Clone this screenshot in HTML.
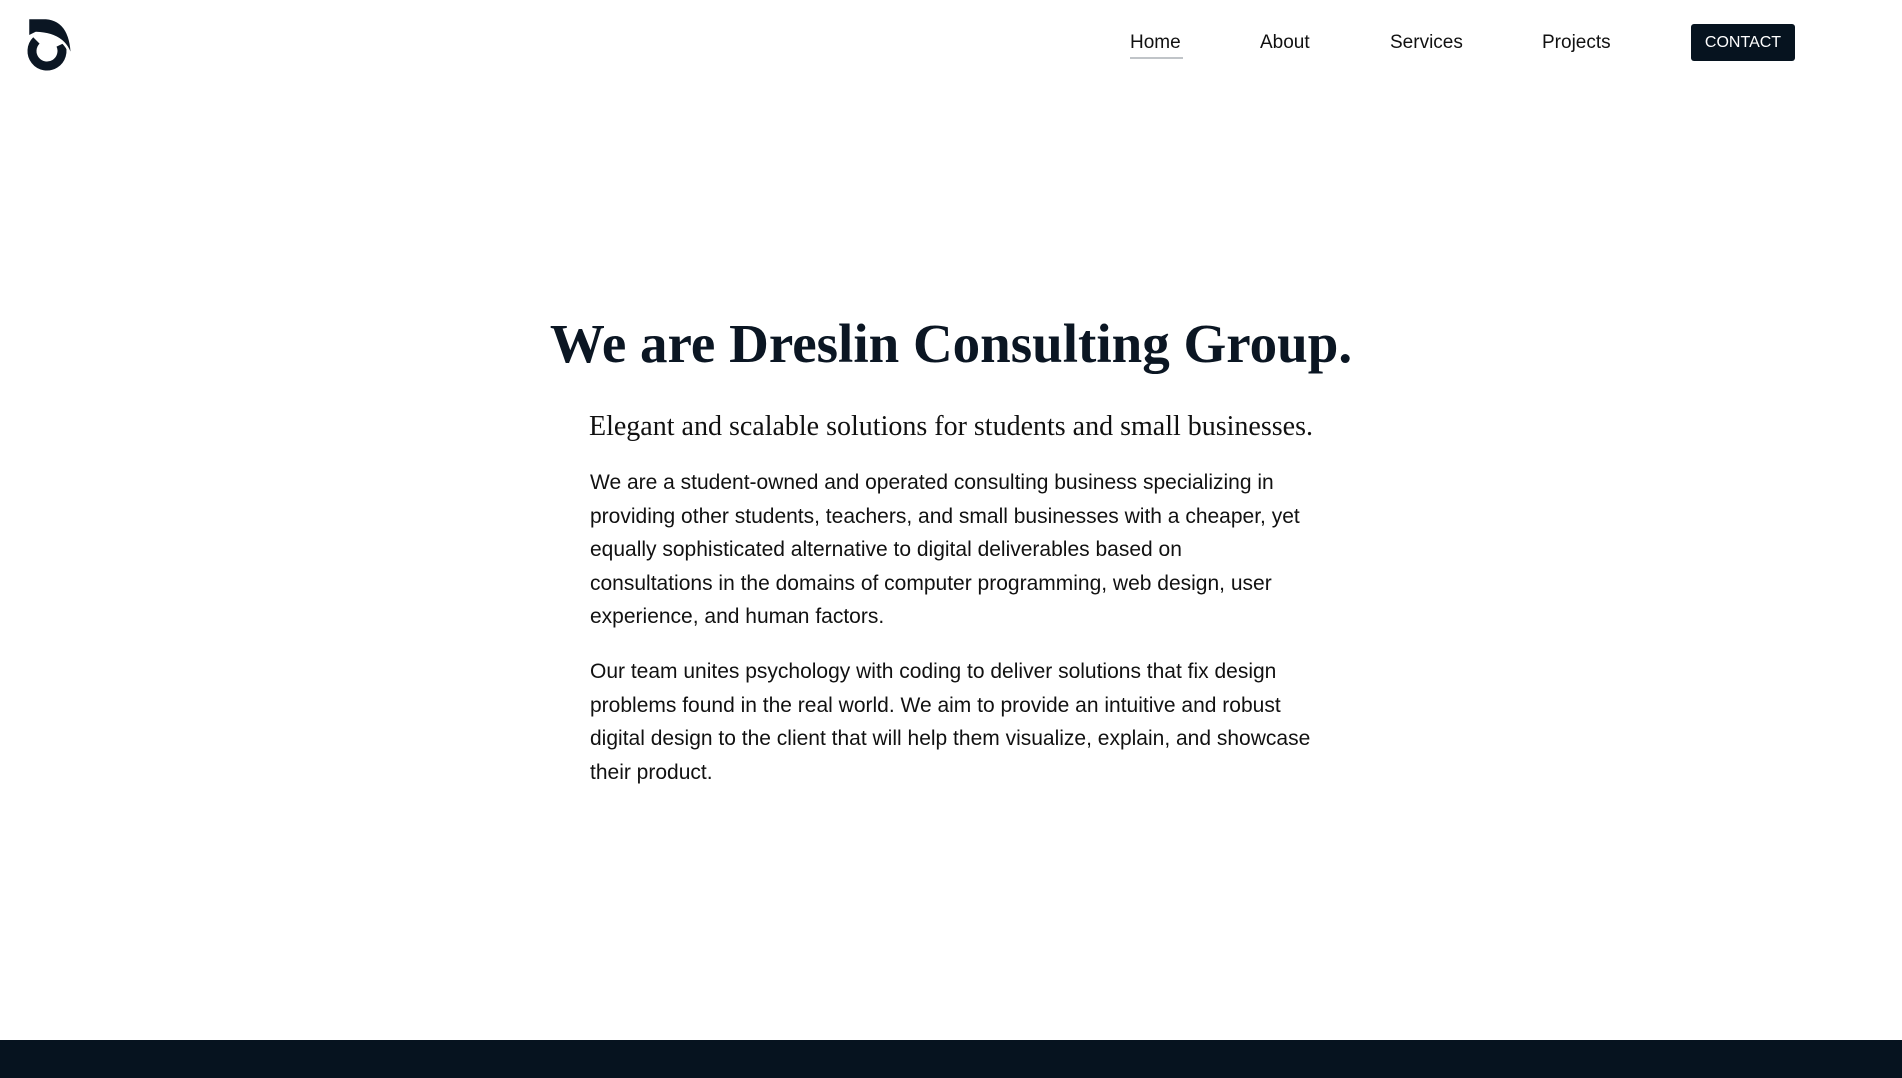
<!DOCTYPE html>
<html><head><style>
*{margin:0;padding:0;box-sizing:border-box}
body{width:1902px;height:1078px;background:#fff;position:relative;overflow:hidden;font-family:"Liberation Sans",sans-serif;color:#0b1623}
.nav a{position:absolute;top:31px;font-size:19px;color:#111;text-decoration:none;line-height:24px}
.btn{position:absolute;left:1691px;top:24px;width:104px;height:37px;background:#06131f;color:#fff;border-radius:3px;font-size:16px;text-align:center;line-height:37px}
h1{position:absolute;left:0;width:1902px;text-align:center;top:312px;font-family:"Liberation Serif",serif;font-weight:bold;font-size:55px;color:#0b1623}
.sub{position:absolute;left:0;width:1902px;text-align:center;top:411px;font-family:"Liberation Serif",serif;font-size:28px;color:#111}
.p{position:absolute;left:590px;white-space:nowrap;font-size:21px;line-height:33.5px;color:#111}
footer{position:absolute;left:0;top:1040px;width:1902px;height:38px;background:#06131f}
</style></head><body>
<svg style="position:absolute;left:0;top:0" width="90" height="80" viewBox="0 0 90 80">
<path d="M36.4 40.4 A15 15 0 1 0 60.6 44.7" fill="none" stroke="#0b1623" stroke-width="9"/>
<path d="M28 18 L46 18 Q73 20 72 62 Q68 34 36 33 L28 37 Z" fill="#0b1623" stroke="#fff" stroke-width="2.5" stroke-linejoin="round"/>
<rect x="26" y="14" width="20" height="3.2" fill="#fff"/>
</svg>
<div class="nav">
<a style="left:1130px">Home</a>
<a style="left:1260px">About</a>
<a style="left:1390px">Services</a>
<a style="left:1542px">Projects</a>
</div>
<div style="position:absolute;left:1130px;top:57px;width:53px;height:2px;background:#c0c4c8"></div>
<div class="btn">CONTACT</div>
<h1>We are Dreslin Consulting Group.</h1>
<div class="sub">Elegant and scalable solutions for students and small businesses.</div>
<div class="p" style="top:466px">We are a student-owned and operated consulting business specializing in<br>providing other students, teachers, and small businesses with a cheaper, yet<br>equally sophisticated alternative to digital deliverables based on<br>consultations in the domains of computer programming, web design, user<br>experience, and human factors.</div>
<div class="p" style="top:655px">Our team unites psychology with coding to deliver solutions that fix design<br>problems found in the real world. We aim to provide an intuitive and robust<br>digital design to the client that will help them visualize, explain, and showcase<br>their product.</div>
<footer></footer>
</body></html>
